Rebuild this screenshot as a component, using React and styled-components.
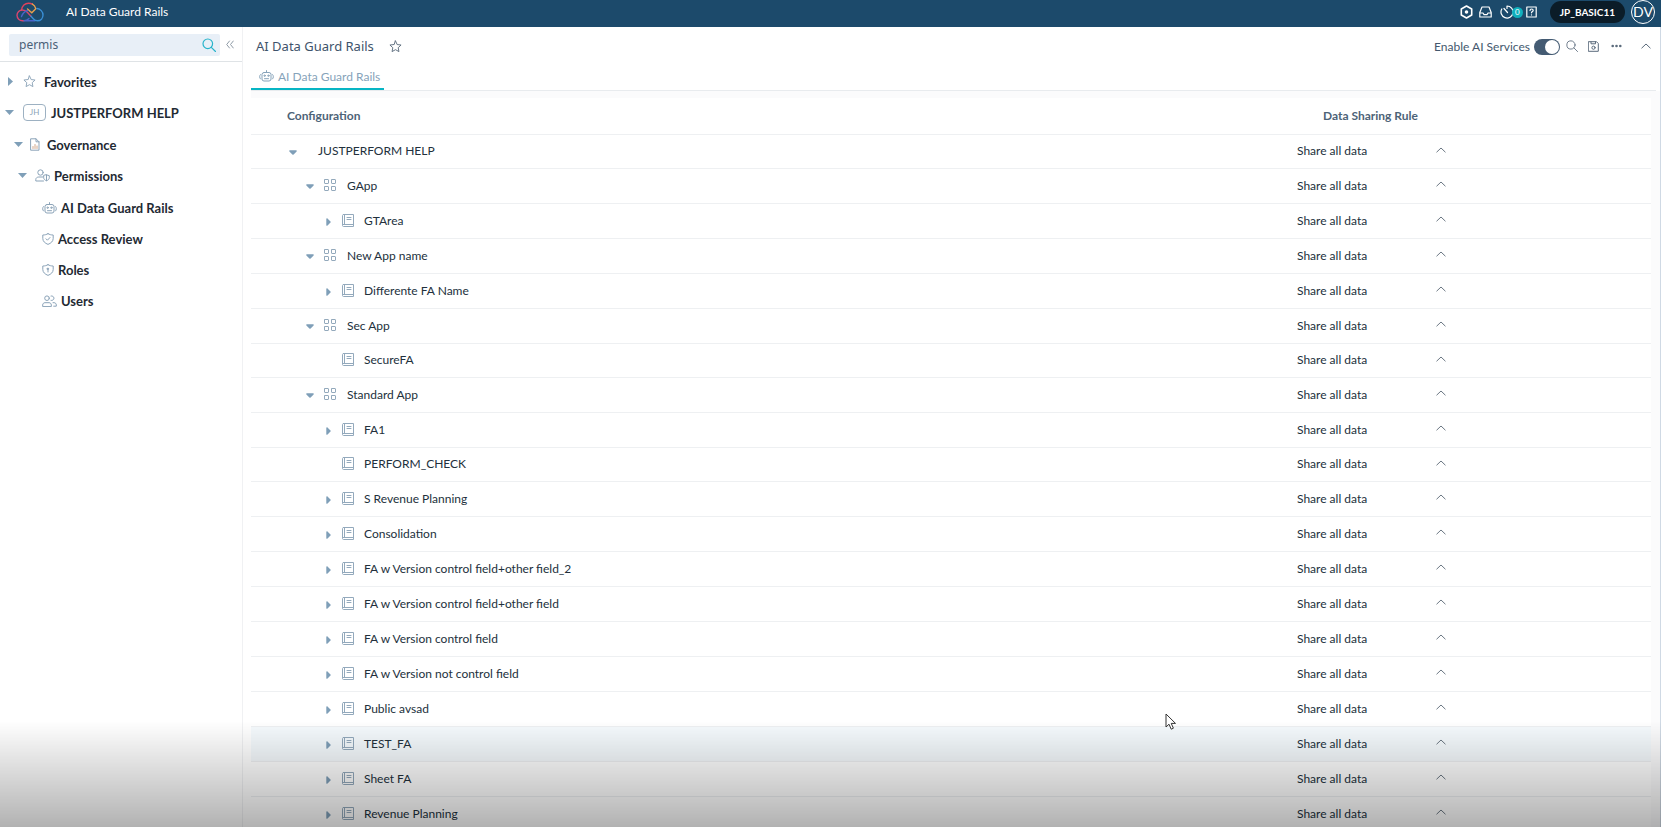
import React, { useState } from "react"
import styled, { createGlobalStyle } from "styled-components"

const GlobalStyle = createGlobalStyle`
  * {
    box-sizing: border-box;
  }
  body {
    margin: 0;
    overflow: hidden;
    background: white;
    font-family: Lato, "Liberation Sans", sans-serif;
    font-size: 12px;
    color: #22303c;
  }
  button {
    font: inherit;
    color: inherit;
    border: 0;
    padding: 0;
    background: none;
    cursor: pointer;
  }
  svg {
    display: block;
    flex: none;
  }
`

const Page = styled.div`
  height: 100vh;
  display: flex;
  flex-direction: column;
`

/* ---------- icons ---------- */

const Line = styled.svg.attrs({ fill: "none", stroke: "currentColor" })`
  stroke-width: ${p => p.$weight || 1};
  stroke-linecap: round;
  stroke-linejoin: round;
`

const LogoIcon = () => (
  <svg
    width="28"
    height="20"
    viewBox="0 0 28 20"
    fill="none"
    strokeWidth="1.4"
    strokeLinecap="round"
  >
    <path stroke="#e0425c" d="M5.500 8C6 4 9 1.200 12.500 1.200c1.500 0 2.800.3 3.900.9" />
    <path stroke="#e8a04c" d="M16.400 2.100c1.700.9 2.800 2.400 3.300 4.300M11.500 7l4.300 3.800L20 6.500" />
    <path
      stroke="#d8456e"
      d="M8 18.800H6.500A5.600 5.600 0 0 1 1 13.300C1 10.300 3.500 8 6.300 8c2 0 3.600.8 5 2.300l3.700 4"
    />
    <path stroke="#4a62c8" d="M8 18.800h11M5.500 14.500c1-3 3-5 6-6M8 18.800c2 0 3.500-.8 5-2.300" />
    <path
      stroke="#3a8fd6"
      d="M15 14.300l2.500 2.700c1.200 1.300 2.300 1.800 4 1.800 3.200 0 5.500-2.500 5.500-5.700 0-3.500-2.700-6.200-6-6.600"
    />
  </svg>
)

const StarIcon = ({ size = 13 }) => (
  <Line width={size} height={size} viewBox="0 0 14 14">
    <path d="M7 1l1.800 3.900 4.200.5-3.100 2.900.8 4.200L7 10.400l-3.700 2.100.8-4.200L1 5.400l4.200-.5z" />
  </Line>
)

const SearchIcon = ({ size = 12, weight = 1 }) => (
  <Line width={size} height={size} viewBox="0 0 14 14" $weight={weight}>
    <circle cx="5.800" cy="5.800" r="4.800" />
    <path d="M9.300 9.300l4.200 4.200" />
  </Line>
)

const CollapseIcon = () => (
  <Line width="8" height="9" viewBox="0 0 8 9">
    <path d="M3.500 1L.7 4.500 3.500 8M7.300 1L4.500 4.500 7.300 8" />
  </Line>
)

const ChevronUpIcon = () => (
  <Line width="10" height="6" viewBox="0 0 10 6">
    <path d="M.8 5L5 1l4.200 4" />
  </Line>
)

const RobotIcon = () => (
  <Line width="15" height="12" viewBox="0 0 15 12">
    <rect x="3" y="2.500" width="9" height="8.500" rx="2" />
    <path d="M7.500 2.500V.6M1.500 4.500C.3 5.500.3 8 1.500 9M13.500 4.500c1.200 1 1.200 3.500 0 4.500M5.500 8.700h4" />
    <circle cx="5.600" cy="5.700" r=".7" />
    <circle cx="9.400" cy="5.700" r=".7" />
  </Line>
)

const FileIcon = () => (
  <Line width="10" height="13" viewBox="0 0 10 13">
    <path d="M1 .8h5l3 3v8.400H1zM6 .8v3h3" />
    <path stroke="#d2a88c" d="M3 10.500v-2M5 10.500V6.500M7 10.500V8" />
  </Line>
)

const UserShieldIcon = () => (
  <Line width="15" height="13" viewBox="0 0 15 13">
    <circle cx="5.500" cy="3.500" r="2.700" />
    <path d="M8.500 12H.8v-1.500c0-1.500 1.300-2.500 3-2.500H8M11.500 5.800l2.800.9v2c0 1.500-1.200 2.500-2.800 3.100-1.600-.6-2.800-1.600-2.800-3.100v-2zM11.500 6v5.500" />
  </Line>
)

const ShieldIcon = ({ locked }) => (
  <Line width="12" height="12" viewBox="0 0 12 12">
    <path d="M6 .7c1.500.9 3.200 1.300 5.200 1.300v3.500c0 2.800-2.200 4.700-5.200 5.900C3 10.200.8 8.300.8 5.500V2C2.800 2 4.500 1.600 6 .7z" />
    {locked ? <path d="M6 5v3M5.400 4.300h1.200v1H5.400z" /> : <path d="M4 5.800l1.400 1.400L8 4.500" />}
  </Line>
)

const UsersIcon = () => (
  <Line width="15" height="12" viewBox="0 0 15 12">
    <circle cx="5" cy="3.200" r="2.300" />
    <path d="M9 1a2.300 2.300 0 1 1 0 4.400M.7 11.200V10c0-1.400 1-2.300 2.300-2.300h4c1.300 0 2.300.9 2.300 2.300v1.200zM11 7.700h1c1.300 0 2.300.9 2.300 2.300v1.200h-2.600" />
  </Line>
)

const AppIcon = () => (
  <Line width="13" height="13" viewBox="0 0 13 13">
    <rect x=".5" y=".5" width="4" height="4" rx=".5" />
    <rect x="7.500" y=".5" width="4" height="4" rx=".5" />
    <rect x=".5" y="7.500" width="4" height="4" rx=".5" />
    <rect x="7.500" y="7.500" width="4" height="4" rx=".5" />
  </Line>
)

const BookIcon = () => (
  <Line width="12" height="14" viewBox="0 0 12 14">
    <path d="M1.500.500h10v12h-10c-.6 0-1-.4-1-1v-10c0-.6.4-1 1-1zM.500 10.500h11M2.500.5v10M5 3.500h4M5 5.500h4" />
  </Line>
)

const HexIcon = () => (
  <Line width="13" height="14" viewBox="0 0 13 14" $weight={1.6}>
    <path d="M6.500 1l5.200 3v6l-5.200 3-5.200-3V4z" />
    <circle cx="6.500" cy="7" r="1" fill="currentColor" />
  </Line>
)

const TrayIcon = () => (
  <Line width="13" height="12" viewBox="0 0 13 12" $weight={1.2}>
    <path d="M3 1h7l2.200 5.500V11H.8V6.500zM.8 7H4l1 1.600h3L9 7h3.200" />
  </Line>
)

const TimerIcon = () => (
  <Line width="14" height="14" viewBox="0 0 14 14" $weight={1.2}>
    <path d="M7 3.500V1a6 6 0 1 1-5.200 3M4 3.500l3.500 4" />
  </Line>
)

const HelpIcon = () => (
  <Line width="11" height="12" viewBox="0 0 11 12" $weight={1.2}>
    <rect x=".8" y="1" width="9.400" height="10" />
    <path d="M4 4.500c0-2 3.200-2 3.200 0 0 1-1.700 1.100-1.700 2.300M5.500 8.800v.1" />
  </Line>
)

const SaveIcon = () => (
  <Line width="11" height="11" viewBox="0 0 11 11">
    <path d="M.7.700h7.800l1.800 1.800v7.800H.7zM3 .8v2h4.500v-2" />
    <circle cx="5.500" cy="6.700" r="1.600" />
  </Line>
)

const DotsIcon = () => (
  <svg width="11" height="4" viewBox="0 0 11 4" fill="currentColor">
    <circle cx="1.700" cy="2" r="1.300" />
    <circle cx="5.500" cy="2" r="1.300" />
    <circle cx="9.300" cy="2" r="1.300" />
  </svg>
)

const Caret = styled.span`
  display: flex;
  align-items: center;
  justify-content: center;
  flex: none;
  width: 10px;
  color: #7f9fb8;
`

const TreeCaret = ({ open }) => (
  <Caret>
    {open ? (
      <svg width="9" height="5" viewBox="0 0 9 5" fill="currentColor">
        <path d="M0 0h9L4.500 5z" />
      </svg>
    ) : (
      <svg width="5" height="9" viewBox="0 0 5 9" fill="currentColor">
        <path d="M0 0v9l5-4.500z" />
      </svg>
    )}
  </Caret>
)

// rounder and a bit smaller than the one in the side menu
const RowCaret = ({ open }) => (
  <Caret>
    {open ? (
      <svg width="8" height="5" viewBox="0 0 8 5" fill="currentColor">
        <path d="M.8.300h6.400c.6 0 .8.800.4 1.200L4.600 4.500a.9.900 0 0 1-1.200 0L.4 1.500C0 1.100.2.300.8.300z" />
      </svg>
    ) : (
      <svg width="5" height="8" viewBox="0 0 5 8" fill="currentColor">
        <path d="M.3.800v6.400c0 .6.800.8 1.200.4l3-3a.9.900 0 0 0 0-1.200l-3-3C1.100 0 .3.200.3.800z" />
      </svg>
    )}
  </Caret>
)

/* ---------- top bar ---------- */

const TopBar = styled.header`
  display: flex;
  align-items: center;
  flex: none;
  height: 27px;
  padding: 0 6px 3px 16px;
  background: #1c4a6b;
  color: white;
`

const AppName = styled.span`
  margin-left: 22px;
  font-size: 12px;
  line-height: 16px;
`

const TopActions = styled.div`
  display: flex;
  align-items: center;
  gap: 6px;
  margin-left: auto;
`

const IconButton = styled.button`
  display: flex;
  align-items: center;
  position: relative;
`

const Count = styled.span`
  position: absolute;
  left: 12px;
  top: 2px;
  width: 11px;
  height: 11px;
  border-radius: 50%;
  background: #10b0bd;
  font-size: 8px;
  line-height: 11px;
  text-align: center;
`

const TimerButton = styled(IconButton)`
  margin: 0 6px 0 2px;
`

const TenantPill = styled.button`
  height: 22px;
  margin-left: 7px;
  padding: 0 10px;
  border-radius: 11px;
  background: #0b1c28;
  font-size: 10px;
  font-weight: 700;
`

const Avatar = styled.button`
  width: 24px;
  height: 24px;
  border: 1px solid white;
  border-radius: 50%;
  font-size: 14px;
  line-height: 20px;
`

/* ---------- sidebar ---------- */

const Body = styled.div`
  display: flex;
  flex: 1;
  min-height: 0;
`

const Sidebar = styled.aside`
  flex: none;
  width: 243px;
  border-right: 1px solid #f0f1f3;
`

const SearchRow = styled.div`
  display: flex;
  align-items: center;
  gap: 6px;
  height: 35px;
  padding: 1px 8px 0 9px;
  border-bottom: 1px solid #dfe3e6;
  color: #8f9ba6;
`

const SearchField = styled.label`
  display: flex;
  align-items: center;
  width: 211px;
  height: 22px;
  padding: 0 4px 0 10px;
  border-radius: 2px;
  background: #e8eff7;
  color: #28b4cb;
`

const SearchInput = styled.input`
  flex: 1;
  min-width: 0;
  padding: 0;
  border: 0;
  outline: 0;
  background: none;
  font: 12px "Noto Sans", sans-serif;
  color: #4a6178;
`

const NavTree = styled.ul`
  margin: 0;
  padding: ${p => p.$top || 0}px 0 0;
  list-style: none;
`

const NavItem = styled.button`
  display: flex;
  align-items: center;
  gap: ${p => p.$gap || 4}px;
  width: 100%;
  height: 31px;
  padding-left: ${p => p.$indent}px;
  font-size: 13px;
  font-weight: 700;
  color: #8ba3b8;
`

const NavText = styled.span`
  color: #1f2a33;
`

const NavIcon = styled.span`
  display: flex;
  margin-left: ${p => (p.$afterCaret ? 4 : 0)}px;
`

const TenantBadge = styled.span`
  width: 23px;
  height: 17px;
  border: 1px solid #9db1c2;
  border-radius: 4px;
  font-size: 8px;
  font-weight: 400;
  line-height: 15px;
  text-align: center;
`

/* ---------- main ---------- */

const Main = styled.main`
  display: flex;
  flex: 1;
  flex-direction: column;
  min-width: 0;
  padding-left: 8px;
  border-right: 1px solid #cfd9e4;
`

const TitleRow = styled.div`
  display: flex;
  align-items: center;
  flex: none;
  height: 38px;
  padding: 0 9px 0 5px;
  color: #5b6b7c;
`

const Title = styled.h1`
  margin: 0 15px 0 0;
  font: 400 13px "Noto Sans", sans-serif;
  color: #3e536b;
`

const TitleActions = styled.div`
  display: flex;
  align-items: center;
  gap: 10px;
  margin-left: auto;
`

const SwitchLabel = styled.label`
  display: flex;
  align-items: center;
  gap: 4px;
  margin-right: -4px;
  font-size: 12px;
  color: #44586e;
`

const Switch = styled.input`
  appearance: none;
  display: flex;
  align-items: center;
  justify-content: flex-end;
  width: 26px;
  height: 16px;
  margin: 2px 0 0;
  padding: 1px;
  border-radius: 8px;
  background: #445b73;
  cursor: pointer;
  &:not(:checked) {
    justify-content: flex-start;
  }
  &::before {
    content: "";
    width: 14px;
    height: 14px;
    border-radius: 50%;
    background: white;
  }
`

const MoreButton = styled(IconButton)`
  margin: 0 9px 0 2px;
`

const Tabs = styled.div`
  display: flex;
  flex: none;
  margin-right: 4px;
  border-bottom: 1px solid #e8ebee;
`

const Tab = styled.button`
  display: flex;
  align-items: center;
  gap: 4px;
  height: 25px;
  padding: 0 4px 1px 8px;
  border-bottom: 2px solid #07b5c4;
  font-size: 12px;
  color: #86a3ba;
`

const TableArea = styled.section`
  flex: 1;
  min-height: 0;
  overflow: hidden;
  padding: 7px 9px 0 0;
  background: #fbfbfc;
`

const Table = styled.table`
  width: 100%;
  border-collapse: collapse;
  table-layout: fixed;
  background: white;
`

const Row = styled.tr`
  height: ${p => p.$height || 35}px;
  border-bottom: 1px solid #eef0f2;
  background: ${p => (p.$active ? "#f5fafd" : "white")};
`

const HeadCell = styled.th`
  padding: 0 0 0 ${p => p.$inset}px;
  width: ${p => p.$width || "auto"};
  font-size: 12px;
  font-weight: 700;
  text-align: left;
  color: #4d6377;
`

const Cell = styled.td`
  padding: 0;
`

const indents = [37, 54, 72]

const TreeCell = styled.div`
  display: flex;
  align-items: center;
  padding-left: ${p => indents[p.$level]}px;
  color: #93a9bc;
`

const CaretButton = styled(IconButton)`
  width: 10px;
  height: 14px;
  padding-top: 2px;
  margin-right: ${p => (p.$level ? 9 : 20)}px;
`

const ItemName = styled.span`
  margin-left: ${p => p.$offset}px;
  font-size: 12px;
  line-height: 16px;
  color: #22303c;
`

const Rule = styled.div`
  display: flex;
  align-items: center;
  justify-content: space-between;
  width: 149px;
  font-size: 12px;
  line-height: 16px;
  color: #22303c;
`

const RuleButton = styled(IconButton)`
  padding-bottom: 3px;
  color: #6b7783;
`

/* ---------- overlays ---------- */

const BottomShade = styled.div`
  position: fixed;
  inset: auto 0 0;
  height: 106px;
  background: linear-gradient(rgba(0, 0, 0, 0), rgba(0, 0, 0, 0.3));
  pointer-events: none;
`

const Pointer = styled.svg`
  position: fixed;
  left: 1165px;
  top: 713px;
  pointer-events: none;
`

const rows = [
  { name: "JUSTPERFORM HELP", level: 0, open: true },
  { name: "GApp", level: 1, open: true },
  { name: "GTArea", level: 2 },
  { name: "New App name", level: 1, open: true },
  { name: "Differente FA Name", level: 2 },
  { name: "Sec App", level: 1, open: true },
  { name: "SecureFA", level: 2, leaf: true },
  { name: "Standard App", level: 1, open: true },
  { name: "FA1", level: 2 },
  { name: "PERFORM_CHECK", level: 2, leaf: true },
  { name: "S Revenue Planning", level: 2 },
  { name: "Consolidation", level: 2 },
  { name: "FA w Version control field+other field_2", level: 2 },
  { name: "FA w Version control field+other field", level: 2 },
  { name: "FA w Version control field", level: 2 },
  { name: "FA w Version not control field", level: 2 },
  { name: "Public avsad", level: 2 },
  { name: "TEST_FA", level: 2, active: true },
  { name: "Sheet FA", level: 2 },
  { name: "Revenue Planning", level: 2 },
]

const TopHeader = () => (
  <TopBar>
    <LogoIcon />
    <AppName>AI Data Guard Rails</AppName>
    <TopActions>
      <IconButton aria-label="Settings">
        <HexIcon />
      </IconButton>
      <IconButton aria-label="Inbox">
        <TrayIcon />
      </IconButton>
      <TimerButton aria-label="Running jobs">
        <TimerIcon />
        <Count>0</Count>
      </TimerButton>
      <IconButton aria-label="Help">
        <HelpIcon />
      </IconButton>
      <TenantPill>JP_BASIC11</TenantPill>
      <Avatar>DV</Avatar>
    </TopActions>
  </TopBar>
)

const NavLeaf = ({ icon, children }) => (
  <li>
    <NavItem $indent={42}>
      <NavIcon>{icon}</NavIcon>
      <NavText>{children}</NavText>
    </NavItem>
  </li>
)

const SideNav = () => {
  const [query, setQuery] = useState("permis")
  return (
    <Sidebar>
      <SearchRow>
        <SearchField>
          <SearchInput
            aria-label="Search menu"
            value={query}
            onChange={e => setQuery(e.target.value)}
          />
          <SearchIcon size={14} weight={1.2} />
        </SearchField>
        <IconButton aria-label="Collapse menu">
          <CollapseIcon />
        </IconButton>
      </SearchRow>
      <NavTree $top={4}>
        <li>
          <NavItem $indent={5} $gap={8}>
            <TreeCaret />
            <StarIcon />
            <NavText>Favorites</NavText>
          </NavItem>
        </li>
        <li>
          <NavItem $indent={4} $gap={5}>
            <TreeCaret open />
            <NavIcon $afterCaret>
              <TenantBadge>JH</TenantBadge>
            </NavIcon>
            <NavText>JUSTPERFORM HELP</NavText>
          </NavItem>
          <NavTree $top={1}>
            <li>
              <NavItem $indent={13} $gap={7}>
                <TreeCaret open />
                <FileIcon />
                <NavText>Governance</NavText>
              </NavItem>
              <NavTree>
                <li>
                  <NavItem $indent={17}>
                    <TreeCaret open />
                    <NavIcon $afterCaret>
                      <UserShieldIcon />
                    </NavIcon>
                    <NavText>Permissions</NavText>
                  </NavItem>
                  <NavTree $top={1}>
                    <NavLeaf icon={<RobotIcon />}>AI Data Guard Rails</NavLeaf>
                    <NavLeaf icon={<ShieldIcon />}>Access Review</NavLeaf>
                    <NavLeaf icon={<ShieldIcon locked />}>Roles</NavLeaf>
                    <NavLeaf icon={<UsersIcon />}>Users</NavLeaf>
                  </NavTree>
                </li>
              </NavTree>
            </li>
          </NavTree>
        </li>
      </NavTree>
    </Sidebar>
  )
}

const RuleRow = ({ item }) => (
  <Row $height={item.level === 0 || item.leaf ? 34 : 35} $active={item.active}>
    <Cell>
      <TreeCell $level={item.level}>
        <CaretButton
          $level={item.level}
          aria-label={"Toggle " + item.name}
          disabled={item.leaf}
        >
          {!item.leaf && <RowCaret open={item.open} />}
        </CaretButton>
        {item.level === 1 && <AppIcon />}
        {item.level === 2 && <BookIcon />}
        <ItemName $offset={item.level ? 10 : 0}>{item.name}</ItemName>
      </TreeCell>
    </Cell>
    <Cell>
      <Rule>
        Share all data
        <RuleButton aria-label={"Change rule for " + item.name}>
          <ChevronUpIcon />
        </RuleButton>
      </Rule>
    </Cell>
  </Row>
)

const Content = () => {
  const [enabled, setEnabled] = useState(true)
  return (
    <Main>
      <TitleRow>
        <Title>AI Data Guard Rails</Title>
        <IconButton aria-label="Add to favorites">
          <StarIcon />
        </IconButton>
        <TitleActions>
          <SwitchLabel>
            Enable AI Services
            <Switch
              type="checkbox"
              checked={enabled}
              onChange={e => setEnabled(e.target.checked)}
            />
          </SwitchLabel>
          <IconButton aria-label="Search">
            <SearchIcon />
          </IconButton>
          <IconButton aria-label="Save">
            <SaveIcon />
          </IconButton>
          <MoreButton aria-label="More">
            <DotsIcon />
          </MoreButton>
          <IconButton aria-label="Collapse header">
            <ChevronUpIcon />
          </IconButton>
        </TitleActions>
      </TitleRow>
      <Tabs>
        <Tab>
          <RobotIcon />
          AI Data Guard Rails
        </Tab>
      </Tabs>
      <TableArea>
        <Table>
          <thead>
            <Row $height={36}>
              <HeadCell $inset={36}>Configuration</HeadCell>
              <HeadCell $inset={26} $width="354px">
                Data Sharing Rule
              </HeadCell>
            </Row>
          </thead>
          <tbody>
            {rows.map(item => (
              <RuleRow key={item.name} item={item} />
            ))}
          </tbody>
        </Table>
      </TableArea>
    </Main>
  )
}

export default function App() {
  return (
    <Page>
      <GlobalStyle />
      <TopHeader />
      <Body>
        <SideNav />
        <Content />
      </Body>
      <BottomShade />
      <Pointer width="12" height="18" viewBox="0 0 12 18">
        <path
          d="M1 1v13l3-2.800 2.200 5 2.200-1-2.200-4.800H10.500z"
          fill="white"
          stroke="#333"
        />
      </Pointer>
    </Page>
  )
}
